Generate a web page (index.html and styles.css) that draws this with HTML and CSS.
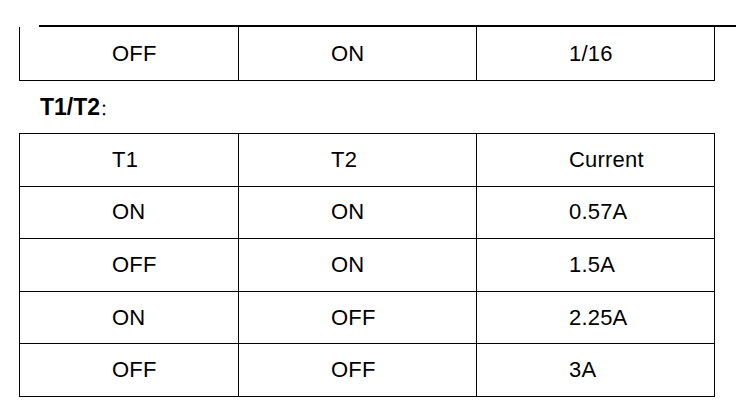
FILE: index.html
```html
<!DOCTYPE html>
<html>
<head>
<meta charset="utf-8">
<link rel="stylesheet" href="styles.css">
</head>
<body>
<div class="rule"></div>
<table class="grid first">
  <tr><td>OFF</td><td>ON</td><td>1/16</td></tr>
</table>
<p class="heading"><b>T1/T2</b><span class="colon">：</span></p>
<table class="grid second">
  <tr><td>T1</td><td>T2</td><td>Current</td></tr>
  <tr><td>ON</td><td>ON</td><td>0.57A</td></tr>
  <tr><td>OFF</td><td>ON</td><td>1.5A</td></tr>
  <tr><td>ON</td><td>OFF</td><td>2.25A</td></tr>
  <tr><td>OFF</td><td>OFF</td><td>3A</td></tr>
</table>
</body>
</html>
```
FILE: styles.css
```css
html, body {
  margin: 0;
  padding: 0;
  background: #fff;
  color: #000;
  font-family: "Liberation Sans", Arial, "Noto Sans CJK SC", sans-serif;
}
.rule {
  margin: 25px 0 0 39px;
  height: 2px;
  background: #000;
}
.grid {
  border-collapse: collapse;
  margin-left: 19px;
  table-layout: fixed;
  width: 696px;
}
.grid td {
  border: 1px solid #000;
  height: 53px;
  padding: 0 0 0 92px;
  font-size: 22px;
  letter-spacing: 0.2px;
  vertical-align: middle;
  white-space: nowrap;
}
.grid td:first-child {
  width: 126px;
}
.grid td:nth-child(2) {
  width: 145px;
}
.first td {
  border-top: none;
}
.heading {
  margin: 0;
  padding: 13px 0 0 40px;
  height: 39px;
  font-size: 23px;
  line-height: 26px;
}
.heading b {
  font-weight: bold;
}
.colon {
  font-family: "Noto Sans CJK SC", sans-serif;
  font-size: 16px;
}
.second td {
  height: 51.6px;
}
```
